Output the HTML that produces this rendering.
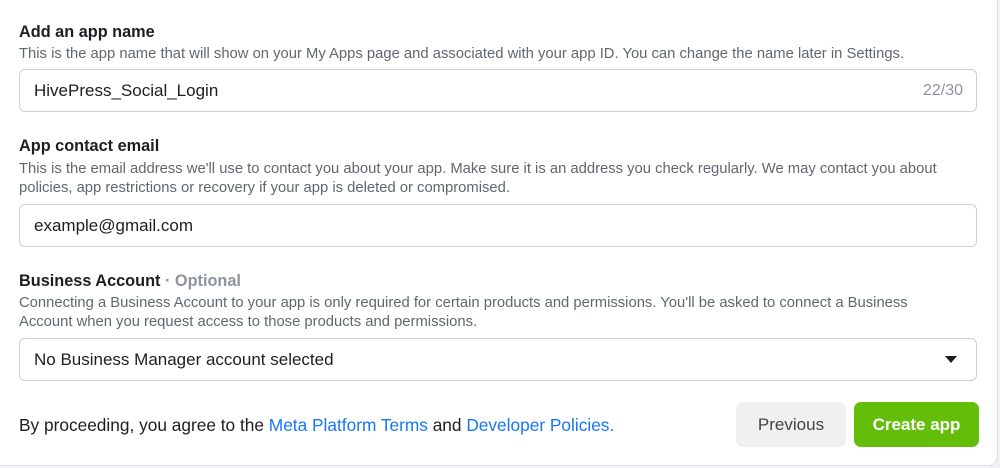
<!DOCTYPE html><html><head><style>
body{margin:0;background:#f0f2f5;font-family:"Liberation Sans",Arial,sans-serif;width:1000px;height:468px;overflow:hidden;position:relative}
.card{position:absolute;left:-10px;top:-10px;width:1006px;height:474px;background:#fff;border:1px solid #dadde1;border-radius:10px}
.a{position:absolute;white-space:nowrap}
.t{font-size:16.3px;font-weight:bold;color:#1c1e21}
.d{font-size:14.8px;color:#606770;line-height:19px}
.in{position:absolute;left:19px;width:958px;height:43px;border:1px solid #ccd0d5;border-radius:6px;box-sizing:border-box;font-size:17px;color:#1c1e21;padding-left:14px;line-height:41px}
</style></head><body><div class="card"></div>
<div class="a t" style="left:19px;top:23px">Add an app name</div>
<div class="a d" style="left:19px;top:45px">This is the app name that will show on your My Apps page and associated with your app ID. You can change the name later in Settings.</div>
<div class="in" style="top:69px">HivePress_Social_Login<span style="position:absolute;right:13px;color:#8d949e;font-size:16px">22/30</span></div>
<div class="a t" style="left:19px;top:137px">App contact email</div>
<div class="a d" style="left:19px;top:160px">This is the email address we'll use to contact you about your app. Make sure it is an address you check regularly. We may contact you about<br>policies, app restrictions or recovery if your app is deleted or compromised.</div>
<div class="in" style="top:204px">example@gmail.com</div>
<div class="a t" style="left:19px;top:272px">Business Account <span style="color:#8d949e">· Optional</span></div>
<div class="a d" style="left:19px;top:294px">Connecting a Business Account to your app is only required for certain products and permissions. You'll be asked to connect a Business<br>Account when you request access to those products and permissions.</div>
<div class="in" style="top:338px">No Business Manager account selected<svg style="position:absolute;right:19px;top:17px" width="12" height="8" viewBox="0 0 12 8"><path d="M0 0H12L6 7Z" fill="#1c1e21"/></svg></div>
<div class="a" style="left:19px;top:415px;font-size:17.3px;color:#1c1e21">By proceeding, you agree to the <span style="color:#1877f2">Meta Platform Terms</span> and <span style="color:#1877f2">Developer Policies.</span></div>
<div class="a" style="left:736px;top:402px;width:110px;height:45px;background:#f0f0f0;border-radius:7px;text-align:center;line-height:45px;font-size:17px;color:#444">Previous</div>
<div class="a" style="left:854px;top:402px;width:125px;height:45px;background:#63be09;border-radius:7px;text-align:center;line-height:45px;font-size:17px;font-weight:bold;color:#fff">Create app</div>
</body></html>
